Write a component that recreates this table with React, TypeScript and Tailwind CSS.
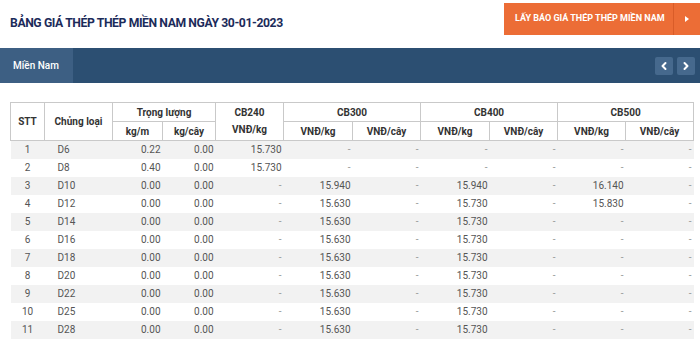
import { ChevronLeft, ChevronRight } from "lucide-react";

type Row = [string, string, string, string, string, string, string, string, string, string, string];

const rows: Row[] = [
  ["1", "D6", "0.22", "0.00", "15.730", "-", "-", "-", "-", "-", "-"],
  ["2", "D8", "0.40", "0.00", "15.730", "-", "-", "-", "-", "-", "-"],
  ["3", "D10", "0.00", "0.00", "-", "15.940", "-", "15.940", "-", "16.140", "-"],
  ["4", "D12", "0.00", "0.00", "-", "15.630", "-", "15.730", "-", "15.830", "-"],
  ["5", "D14", "0.00", "0.00", "-", "15.630", "-", "15.730", "-", "-", "-"],
  ["6", "D16", "0.00", "0.00", "-", "15.630", "-", "15.730", "-", "-", "-"],
  ["7", "D18", "0.00", "0.00", "-", "15.630", "-", "15.730", "-", "-", "-"],
  ["8", "D20", "0.00", "0.00", "-", "15.630", "-", "15.730", "-", "-", "-"],
  ["9", "D22", "0.00", "0.00", "-", "15.630", "-", "15.730", "-", "-", "-"],
  ["10", "D25", "0.00", "0.00", "-", "15.630", "-", "15.730", "-", "-", "-"],
  ["11", "D28", "0.00", "0.00", "-", "15.630", "-", "15.730", "-", "-", "-"],
];

const widths = [34, 68, 50, 53, 68, 69, 68, 69, 68, 68, 68];

const th = "border border-[#c9c9c9] font-bold text-[#333] text-[10px] text-center align-middle p-0";

export default function App() {
  return (
    <div className="w-[700px] h-[347px] bg-white overflow-hidden font-['Roboto',sans-serif]">
      <div className="flex items-start justify-between h-[48px] pt-[3px]">
        <h1 className="pl-[10px] pt-[11px] text-[12.2px] font-bold text-[#1c2b5a] whitespace-nowrap tracking-[-0.4px]">
          BẢNG GIÁ THÉP THÉP MIỀN NAM NGÀY 30-01-2023
        </h1>
        <button className="flex h-[32px] w-[196px] items-center bg-[#ec6d36] text-white">
          <span className="flex-1 pl-[11px] text-left text-[9px] font-bold whitespace-nowrap">
            LẤY BÁO GIÁ THÉP THÉP MIỀN NAM
          </span>
          <span className="flex h-full w-[27px] items-center justify-center border-l border-[#d95c28]">
            <svg width="4" height="6" viewBox="0 0 4 6">
              <path d="M0 0 L4 3 L0 6 Z" fill="white" />
            </svg>
          </span>
        </button>
      </div>

      <div className="flex h-[35px] items-center bg-[#2c4f72]">
        <div className="flex h-full w-[73px] items-center bg-[#3d5f83] pl-[13px] text-[10px] text-white font-medium">
          Miền Nam
        </div>
        <div className="ml-auto flex gap-[4px] pr-[5px]">
          <span className="flex h-[18px] w-[18px] items-center justify-center rounded-[2px] bg-[#46698d]">
            <ChevronLeft className="h-[12px] w-[12px] text-white" strokeWidth={4} />
          </span>
          <span className="flex h-[18px] w-[18px] items-center justify-center rounded-[2px] bg-[#46698d]">
            <ChevronRight className="h-[12px] w-[12px] text-white" strokeWidth={4} />
          </span>
        </div>
      </div>

      <div className="pl-[10px] pt-[19px]">
        <table className="w-[683px] table-fixed border-collapse">
          <colgroup>
            {widths.map((w, i) => (
              <col key={i} style={{ width: w }} />
            ))}
          </colgroup>
          <thead>
            <tr className="h-[19px]">
              <th rowSpan={2} className={th}>STT</th>
              <th rowSpan={2} className={th}>Chủng loại</th>
              <th colSpan={2} className={th}>Trọng lượng</th>
              <th className={`${th} border-b-0`}>CB240</th>
              <th colSpan={2} className={th}>CB300</th>
              <th colSpan={2} className={th}>CB400</th>
              <th colSpan={2} className={th}>CB500</th>
            </tr>
            <tr className="h-[19px]">
              <th className={th}>kg/m</th>
              <th className={th}>kg/cây</th>
              <th className={`${th} border-t-0 align-top`}>VNĐ/kg</th>
              <th className={th}>VNĐ/kg</th>
              <th className={th}>VNĐ/cây</th>
              <th className={th}>VNĐ/kg</th>
              <th className={th}>VNĐ/cây</th>
              <th className={th}>VNĐ/kg</th>
              <th className={th}>VNĐ/cây</th>
            </tr>
          </thead>
          <tbody>
            {rows.map((r, i) => (
              <tr key={r[0]} className={`h-[18px] ${i % 2 === 0 ? "bg-[#f2f2f2]" : "bg-white"}`}>
                {r.map((c, j) => (
                  <td
                    key={j}
                    className={`p-0 text-[10px] leading-none ${c === "-" ? "text-[#999]" : "text-[#555]"} ${
                      j === 0 ? "text-center" : j === 1 ? "pl-[13px] text-left" : "pr-[2px] text-right"
                    }`}
                  >
                    {c}
                  </td>
                ))}
              </tr>
            ))}
          </tbody>
        </table>
      </div>
    </div>
  );
}
